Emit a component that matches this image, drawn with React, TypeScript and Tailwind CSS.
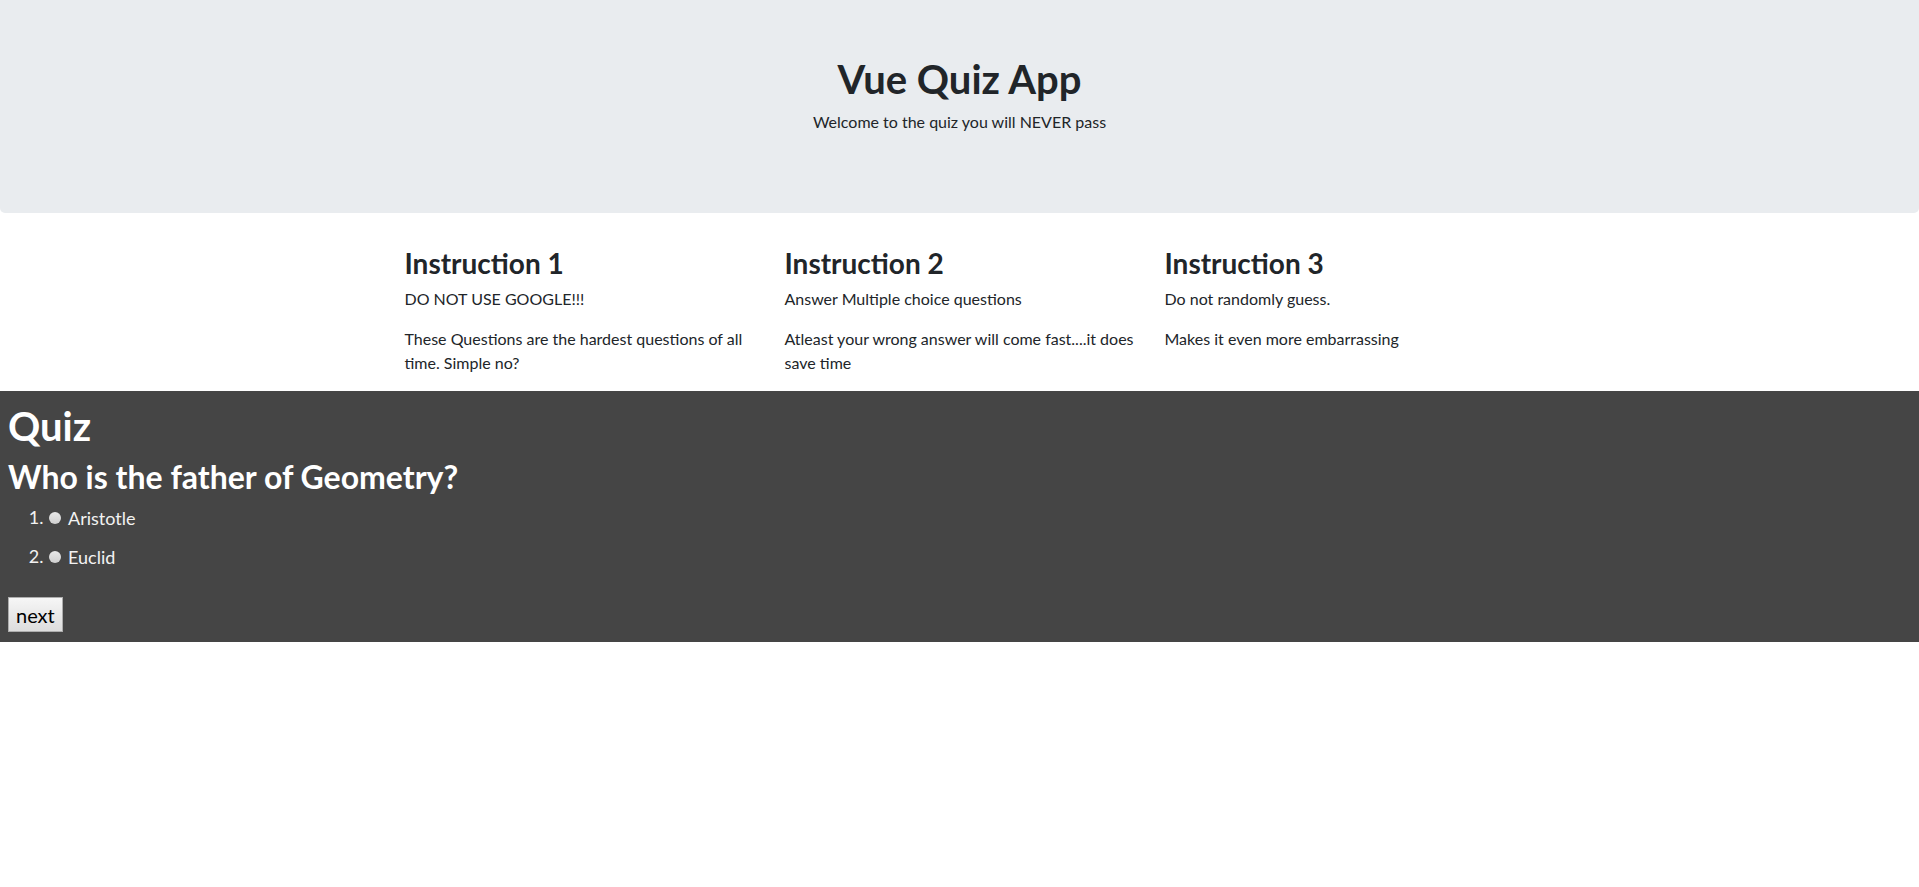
import React, { useState } from 'react';

const instructions = [
  { title: 'Instruction 1', first: 'DO NOT USE GOOGLE!!!', second: 'These Questions are the hardest questions of all time. Simple no?' },
  { title: 'Instruction 2', first: 'Answer Multiple choice questions', second: 'Atleast your wrong answer will come fast....it does save time' },
  { title: 'Instruction 3', first: 'Do not randomly guess.', second: 'Makes it even more embarrassing' },
];

const answers = ['Aristotle', 'Euclid'];

export default function App() {
  const [picked, setPicked] = useState<number | null>(null);

  return (
    <div className="min-h-screen bg-white text-[#212529] font-['Lato',sans-serif]">
      {/* Jumbotron */}
      <header className="bg-[#e9ecef] rounded-b-[5px] pt-[55px] pb-[79px] px-8 mb-[33px] text-center">
        <h1 className="text-[40px] leading-[48px] font-bold mb-[7px]">Vue Quiz App</h1>
        <p className="text-[16px] leading-6">Welcome to the quiz you will NEVER pass</p>
      </header>

      {/* Instructions */}
      <div className="max-w-[1140px] mx-auto grid grid-cols-3">
        {instructions.map((ins) => (
          <div key={ins.title} className="px-[15px]">
            <h3 className="text-[28px] leading-[34px] font-bold mb-[7px]">{ins.title}</h3>
            <p className="text-[16px] leading-6 mb-4">{ins.first}</p>
            <p className="text-[16px] leading-6 mb-4">{ins.second}</p>
          </div>
        ))}
      </div>

      {/* Quiz */}
      <section className="bg-[#454545] text-white pt-[11px] pb-[10px] px-2">
        <h1 className="text-[40px] leading-[48px] font-bold mb-2">Quiz</h1>
        <h2 className="text-[32px] leading-[38px] font-bold">Who is the father of Geometry?</h2>
        <ol className="list-decimal pl-[40px] mt-[2px] mb-[21px] text-[18px] text-[#f2f2f2]">
          {answers.map((a, i) => (
            <li key={a} className="leading-[38px]">
              <label className="inline-flex items-center gap-[7px] cursor-pointer">
                <span
                  onClick={() => setPicked(i)}
                  className={`inline-block w-[12px] h-[12px] rounded-full ml-[1px] bg-gradient-to-b from-[#e8e8e8] to-[#cfcfcf] ${picked === i ? 'ring-2 ring-white' : ''}`}
                />
                {a}
              </label>
            </li>
          ))}
        </ol>
        <button className="h-[35px] px-[7px] text-[20px] leading-none text-black border border-[#adadad] bg-gradient-to-b from-[#f6f6f6] to-[#dddddd]">
          next
        </button>
      </section>
    </div>
  );
}
